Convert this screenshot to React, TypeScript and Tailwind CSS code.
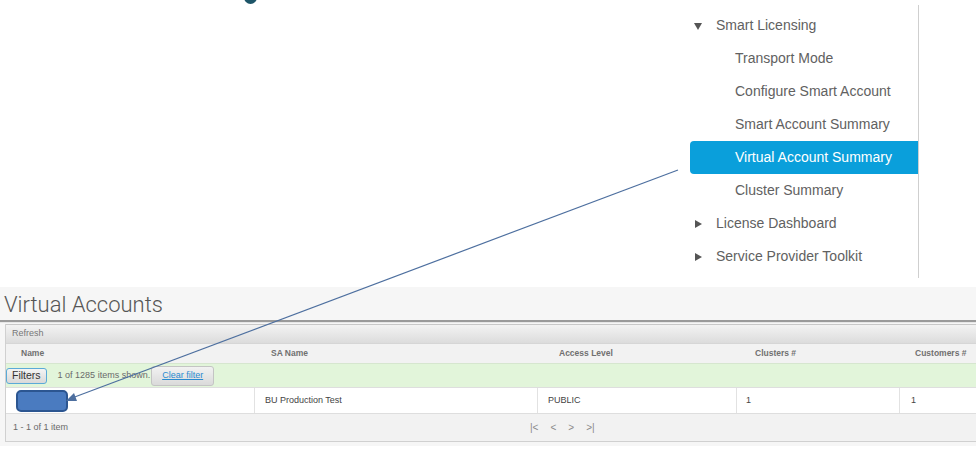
import { ReactNode } from 'react';

const navFont = { fontFamily: '"Liberation Sans", Arial, sans-serif' };

type NavItem = { label: string; level: 0 | 1; caret?: 'open' | 'closed'; active?: boolean };

const navItems: NavItem[] = [
  { label: 'Smart Licensing', level: 0, caret: 'open' },
  { label: 'Transport Mode', level: 1 },
  { label: 'Configure Smart Account', level: 1 },
  { label: 'Smart Account Summary', level: 1 },
  { label: 'Virtual Account Summary', level: 1, active: true },
  { label: 'Cluster Summary', level: 1 },
  { label: 'License Dashboard', level: 0, caret: 'closed' },
  { label: 'Service Provider Toolkit', level: 0, caret: 'closed' },
];

function Caret({ open }: { open: boolean }) {
  return (
    <svg width="8" height="8" viewBox="0 0 8 8" className="mr-[14px] ml-[3px]">
      {open ? <path d="M0 1 L8 1 L4 8 Z" fill="#555" /> : <path d="M1 0 L8 4 L1 8 Z" fill="#555" />}
    </svg>
  );
}

function SideNav() {
  return (
    <div className="mt-[5px] h-[273px] w-[229px] border-r border-[#cfcfcf] pt-[4px]">
      {navItems.map((it) => (
        <div
          key={it.label}
          className={
            'flex h-[33px] items-center text-[14px] ' +
            (it.active ? 'rounded-l-[4px] bg-[#0a9fdb] text-white' : 'text-[#616161]')
          }
        >
          {it.level === 0 ? (
            <div className="flex items-center pl-[1px]">
              <Caret open={it.caret === 'open'} />
              <span>{it.label}</span>
            </div>
          ) : (
            <span className="pl-[45px]">{it.label}</span>
          )}
        </div>
      ))}
    </div>
  );
}

const cols = 'grid grid-cols-[248px_283px_199px_163px_1fr]';

function Cell({ children, className = '' }: { children?: ReactNode; className?: string }) {
  return <div className={'flex items-center ' + className}>{children}</div>;
}

function VirtualAccounts() {
  return (
    <div className="bg-[#f6f6f6] pb-[4px] pt-[4px]">
      <h1 className="pl-[4px] text-[22px] font-light leading-[28px] text-[#555]" style={{ fontFamily: 'Roboto, "Liberation Sans", sans-serif' }}>
        Virtual Accounts
      </h1>
      <div className="mt-[1px] h-[2px] bg-[#9a9a9a]" />
      <div className="h-[1px] bg-[#e6e6e6]" />
      <div className="ml-[5px] mt-[1px] border-b border-l border-[#d0d0d0] text-[9px] text-[#555]">
        <div className="flex h-[19px] items-center border-t border-[#c8c8c8] bg-gradient-to-b from-[#f3f3f3] to-[#dcdcdc] pl-[6px] text-[#777]">
          Refresh
        </div>
        <div className={cols + ' h-[20px] border-t border-[#d6d6d6] bg-[#f2f2f2] text-[8.5px] font-bold text-[#707070]'}>
          <Cell className="pl-[15px]">Name</Cell>
          <Cell className="pl-[17px]">SA Name</Cell>
          <Cell className="pl-[22px]">Access Level</Cell>
          <Cell className="pl-[19px]">Clusters #</Cell>
          <Cell className="pl-[16px]">Customers #</Cell>
        </div>
        <div className="flex h-[24px] items-center border-t border-[#d6e6cf] bg-[#e2f5da]">
          <button className="h-[16px] rounded-[3px] border border-[#5aaad8] bg-gradient-to-b from-[#f4f4f4] to-[#d9d9d9] px-[5px] text-[10.5px] leading-[13px] text-[#333]">
            Filters
          </button>
          <span className="ml-[11px] text-[#6a6a6a]">1 of 1285 items shown.</span>
          <button className="ml-[1px] h-[20px] rounded-[3px] border border-[#c4c4c4] bg-gradient-to-b from-[#f2f2f2] to-[#dadada] px-[10px] text-[9px] text-[#2a8bd0] underline">
            Clear filter
          </button>
        </div>
        <div className={cols + ' h-[26px] border-t border-[#dedede] bg-white text-[#444]'}>
          <Cell className="pl-[10px]">
            <div className="h-[22px] w-[52px] rounded-[5px] border-2 border-[#2c5691] bg-[#4a7bc0]" />
          </Cell>
          <Cell className="border-l border-[#e2e2e2] pl-[10px]">BU Production Test</Cell>
          <Cell className="border-l border-[#e2e2e2] pl-[10px]">PUBLIC</Cell>
          <Cell className="border-l border-[#e2e2e2] pl-[9px]">1</Cell>
          <Cell className="border-l border-[#e2e2e2] pl-[11px]">1</Cell>
        </div>
        <div className="flex h-[28px] items-center border-t border-[#dedede] bg-[#f2f2f2] text-[#6a6a6a]">
          <span className="w-[524px] pl-[7px]">1 - 1 of 1 item</span>
          <div className="flex items-center gap-[12px] text-[10px] text-[#8a8a8a]">
            <span>|&lt;</span>
            <span>&lt;</span>
            <span>&gt;</span>
            <span>&gt;|</span>
          </div>
        </div>
      </div>
    </div>
  );
}

export default function App() {
  return (
    <div className="relative h-[453px] w-[976px] overflow-hidden bg-white" style={navFont}>
      <span className="absolute left-[244px] top-[-9px] h-[13px] w-[13px] rounded-full bg-[#1d5568]" />
      <div className="flex h-[287px]">
        <div className="flex-1" />
        <SideNav />
        <div className="w-[57px]" />
      </div>
      <VirtualAccounts />
      <svg className="pointer-events-none absolute left-0 top-0" width="976" height="453">
        <line x1="678" y1="170" x2="72" y2="398" stroke="#4d6f9f" strokeWidth="1.2" />
        <path d="M66 401 L74 393 L77 401 Z" fill="#4d6f9f" />
      </svg>
    </div>
  );
}
